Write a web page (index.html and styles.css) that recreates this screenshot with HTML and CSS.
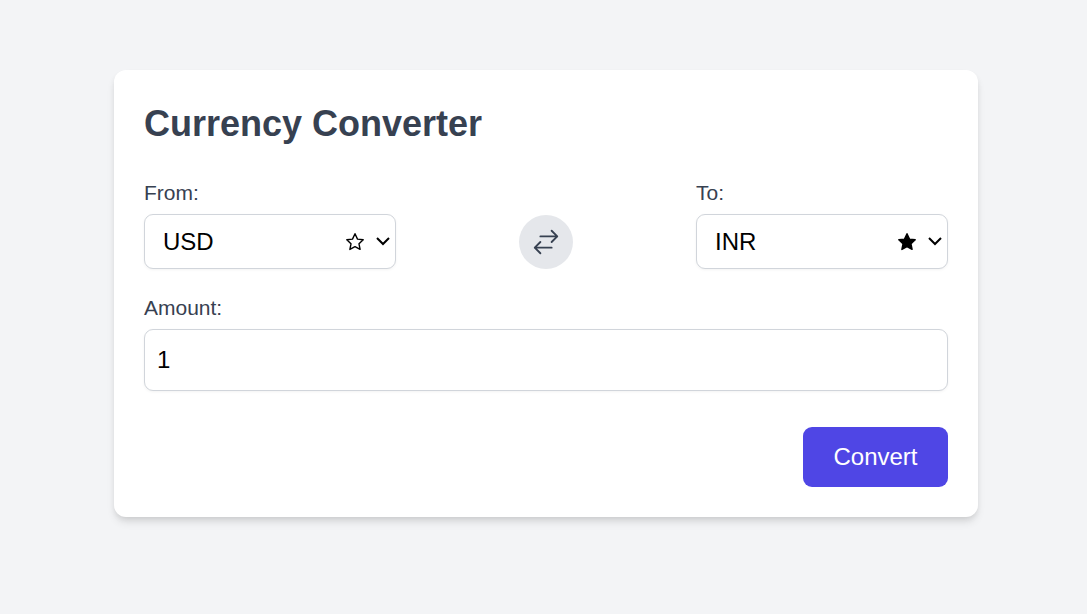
FILE: index.html
```html
<!DOCTYPE html>
<html lang="en">
<head>
    <meta charset="UTF-8">
    <meta name="viewport" content="width=device-width, initial-scale=1.0">
    <title>Currency Converter</title>
    <link rel="stylesheet" href="styles.css">
</head>
<body>
    <div class="card">
        <h1>Currency Converter</h1>
        <div class="currencies">
            <div>
                <label for="from">From:</label>
                <div class="select-box">
                    <select id="from">
                        <option selected>USD</option>
                        <option>INR</option>
                        <option>EUR</option>
                    </select>
                    <button class="favorite" type="button" aria-label="Add to favorites">
                        <svg viewBox="0 0 20 20"><path d="M10 1.7 12.5 7.1 18.2 7.8 14 11.8 15.1 17.4 10 14.7 4.9 17.4 6 11.8 1.8 7.8 7.5 7.1z"/></svg>
                    </button>
                    <svg class="chevron" viewBox="0 0 16 16"><path d="M2 5l6 6 6-6"/></svg>
                </div>
            </div>
            <button class="swap" type="button" aria-label="Swap currencies">
                <svg viewBox="0 0 24 24"><path d="M7.5 21 3 16.5m0 0L7.5 12M3 16.5h13.5m0-13.5L21 7.5m0 0L16.5 12M21 7.5H7.5"/></svg>
            </button>
            <div>
                <label for="to">To:</label>
                <div class="select-box">
                    <select id="to">
                        <option>USD</option>
                        <option selected>INR</option>
                        <option>EUR</option>
                    </select>
                    <button class="favorite active" type="button" aria-label="Remove from favorites">
                        <svg viewBox="0 0 20 20"><path d="M10 1.7 12.5 7.1 18.2 7.8 14 11.8 15.1 17.4 10 14.7 4.9 17.4 6 11.8 1.8 7.8 7.5 7.1z"/></svg>
                    </button>
                    <svg class="chevron" viewBox="0 0 16 16"><path d="M2 5l6 6 6-6"/></svg>
                </div>
            </div>
        </div>
        <div class="amount">
            <label for="amount">Amount:</label>
            <input type="number" id="amount" value="1">
        </div>
        <div class="actions">
            <button class="convert" type="button">Convert</button>
        </div>
    </div>
</body>
</html>
```
FILE: styles.css
```css
* {
    box-sizing: border-box;
}
body {
    font-family: Arial, "Liberation Sans", sans-serif;
    margin: 0;
    padding: 70px 0 70px 5px;
    background-color: #f3f4f6;
    color: #374151;
}
.card {
    max-width: 864px;
    margin: 0 auto;
    padding: 30px;
    border-radius: 12px;
    background-color: #fff;
    box-shadow: 0 6px 9px -1px rgba(0, 0, 0, 0.1), 0 3px 6px -2px rgba(0, 0, 0, 0.1);
}
h1 {
    margin: 0 0 30px;
    font-size: 36px;
    line-height: 48px;
}
label {
    display: block;
    margin-bottom: 6px;
    font-size: 21px;
    line-height: 30px;
}
button {
    padding: 0;
    border: none;
    font-family: inherit;
    cursor: pointer;
}
svg {
    display: block;
}
select, input {
    display: block;
    width: 100%;
    border: 1px solid #d1d5db;
    border-radius: 9px;
    background-color: #fff;
    color: #000;
    font-family: inherit;
    font-size: 24px;
    box-shadow: 0 1px 3px rgba(0, 0, 0, 0.05);
}
select {
    height: 55px;
    padding: 0 60px 0 18px;
    appearance: none;
}
input {
    height: 62px;
    padding: 0 12px;
    appearance: textfield;
}
.currencies {
    display: grid;
    grid-template-columns: 1fr 1fr 1fr;
    gap: 24px;
    align-items: end;
}
.select-box {
    position: relative;
}
.favorite {
    position: absolute;
    top: 18px;
    right: 31px;
    width: 20px;
    height: 20px;
    background: none;
}
.favorite path {
    fill: none;
    stroke: #000;
    stroke-width: 1.4;
    stroke-linejoin: round;
}
.favorite.active path {
    fill: #000;
}
.chevron {
    position: absolute;
    top: 19px;
    right: 5px;
    width: 16px;
    height: 16px;
    fill: none;
    stroke: #000;
    stroke-width: 2;
    pointer-events: none;
}
.swap {
    justify-self: center;
    width: 54px;
    height: 54px;
    padding: 12px;
    border-radius: 50%;
    background-color: #e5e7eb;
}
.swap svg {
    width: 30px;
    height: 30px;
    fill: none;
    stroke: #374151;
    stroke-width: 1.5;
    stroke-linecap: round;
    stroke-linejoin: round;
}
.amount {
    margin-top: 24px;
}
.actions {
    display: flex;
    justify-content: flex-end;
    margin-top: 36px;
}
.convert {
    min-width: 145px;
    height: 60px;
    padding: 0 30px;
    border-radius: 9px;
    background-color: #4f46e5;
    color: #fff;
    font-size: 24px;
}
```
